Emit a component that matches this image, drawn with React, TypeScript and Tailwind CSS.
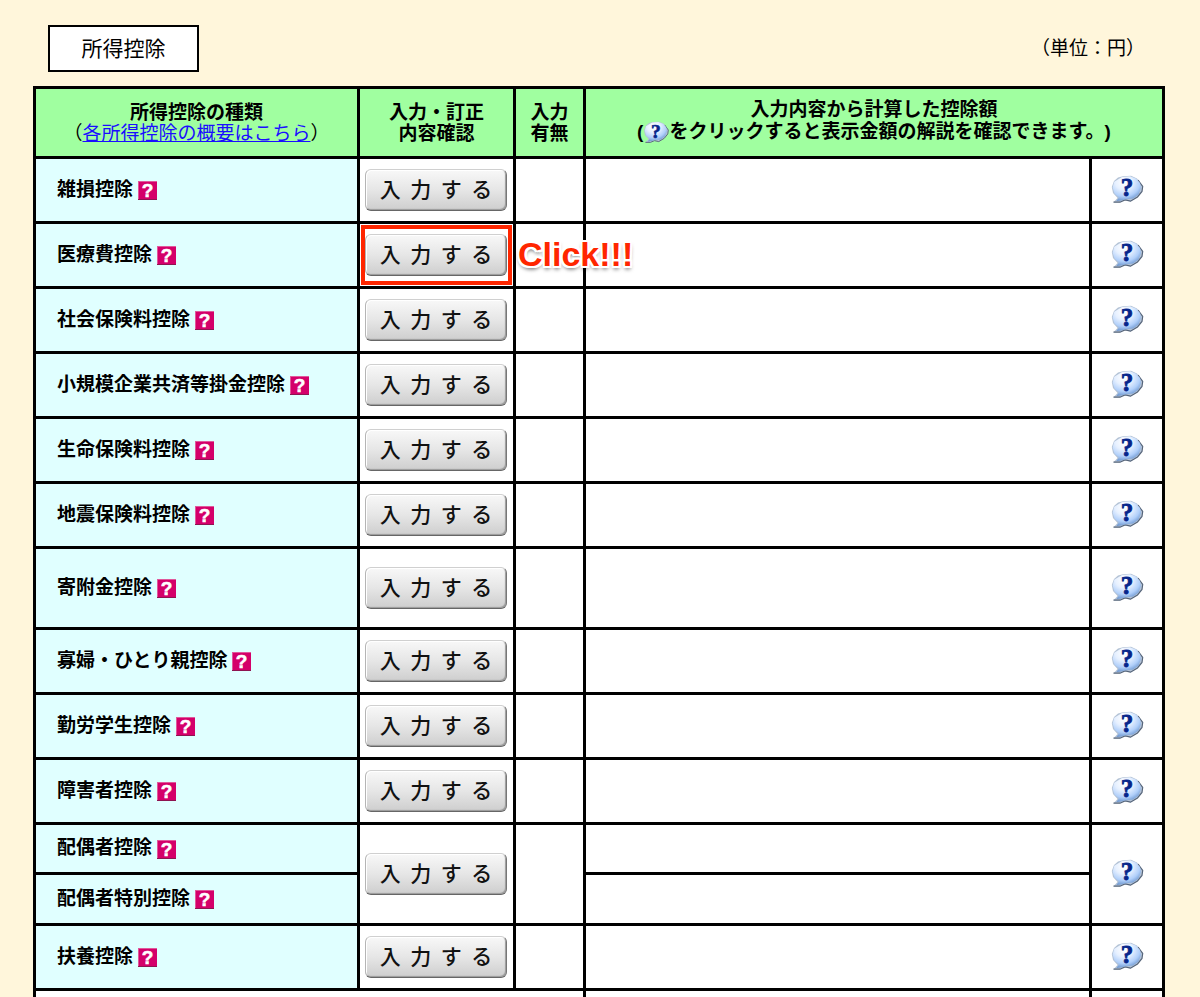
import type { ReactNode } from "react"

interface Deduction {
  name: string
  height: string
  highlight?: boolean
}

const deductions: Deduction[] = [
  { name: "雑損控除", height: "h-[65px]" },
  { name: "医療費控除", height: "h-[65px]", highlight: true },
  { name: "社会保険料控除", height: "h-[65px]" },
  { name: "小規模企業共済等掛金控除", height: "h-[65px]" },
  { name: "生命保険料控除", height: "h-[65px]" },
  { name: "地震保険料控除", height: "h-[65px]" },
  { name: "寄附金控除", height: "h-[81px]" },
  { name: "寡婦・ひとり親控除", height: "h-[65px]" },
  { name: "勤労学生控除", height: "h-[65px]" },
  { name: "障害者控除", height: "h-[65px]" },
]

const cell = "border-[3px] border-black p-0"

function HelpMark() {
  return (
    <svg viewBox="0 0 19 19" className="h-[19px] w-[19px] overflow-visible" aria-hidden="true">
      <rect width="19" height="19" fill="#e0589b" />
      <rect x="1" y="1" width="18" height="18" fill="#d4006a" />
      <rect y="18" width="19" height="1" fill="#8d1450" />
      <text
        x="9.5"
        y="16"
        textAnchor="middle"
        fontFamily="'Liberation Sans', sans-serif"
        fontWeight="bold"
        fontSize="19"
        fill="#fff"
        stroke="#fff"
        strokeWidth="0.5"
      >
        ?
      </text>
    </svg>
  )
}

function Balloon({ className }: { className: string }) {
  return (
    <svg viewBox="0 0 32 28" className={className} aria-hidden="true">
      <defs>
        <radialGradient id="balloon" cx="0.4" cy="0.25" r="0.75">
          <stop offset="0" stopColor="#ffffff" />
          <stop offset="0.4" stopColor="#e6f0ff" />
          <stop offset="0.75" stopColor="#b0cffa" />
          <stop offset="1" stopColor="#6f98d0" />
        </radialGradient>
      </defs>
      <path
        d="M12 1.2 L20 .8 L26 3.5 L31.5 11 L31 16 L26.5 22 L19.5 26.5 L14 24.8 L9 27.2 L2.5 27.2 L6.5 23 L2 18 L.8 12 L3 6 L7 2.6 Z"
        fill="#b4c3d6"
      />
      <path
        d="M27 5 L31.7 11.5 L31 16.5 L26.5 22 L19.5 26.2 L14 25 L9 27.2 L2.5 27.2"
        fill="none"
        stroke="#56657a"
        strokeWidth="1.2"
      />
      <path
        d="M11 2 L19 1.3 L25 3.4 L29 8 L30 13 L27.5 19.5 L22 23.6 L15 24.2 L10 25.4 L5.5 26 L7.8 22.6 L3.5 18.5 L1.6 12.5 L3.2 6.8 Z"
        fill="url(#balloon)"
      />
      <text
        x="16"
        y="21"
        textAnchor="middle"
        fontFamily="'Liberation Serif', serif"
        fontWeight="bold"
        fontSize="25"
        fill="#06258a"
        stroke="#06258a"
        strokeWidth="0.8"
      >
        ?
      </text>
    </svg>
  )
}

function NameCell({ name }: { name: string }) {
  return (
    <th scope="row" className={`${cell} bg-[#e0ffff] pl-[21px] text-left font-bold`}>
      <div className="flex items-center gap-[5px] pb-[2px]">
        <span>{name}</span>
        <a href="#help" aria-label={`${name}の説明`} className="pt-[3px]">
          <HelpMark />
        </a>
      </div>
    </th>
  )
}

function InputButton() {
  return (
    <button
      type="button"
      className="h-[42px] w-[142px] rounded-md border border-t-[#d0d0d0] border-r-[#777] border-b-[#666] border-l-[#b5b5b5] bg-linear-to-b from-[#f8f8f8] via-[#e6e6e6] to-[#cecece] pb-[3px] font-['Noto_Sans_CJK_JP',sans-serif] text-[21px] leading-none font-medium whitespace-pre text-[#111] shadow-[inset_-1px_-1px_1px_#999,inset_1px_1px_0_#fff]"
    >
      入  力  す  る
    </button>
  )
}

function ButtonCell({ rowSpan, children }: { rowSpan?: number; children?: ReactNode }) {
  return (
    <td rowSpan={rowSpan} className={`${cell} relative bg-white`}>
      <div className="flex pb-[1px] pl-[5px]">
        <InputButton />
      </div>
      {children}
    </td>
  )
}

function BalloonCell({ name, rowSpan }: { name: string; rowSpan?: number }) {
  return (
    <td rowSpan={rowSpan} className={`${cell} bg-white`}>
      <a href="#amount" aria-label={`${name}の金額の解説`} className="flex justify-center pb-[2px]">
        <Balloon className="h-7 w-8 overflow-visible" />
      </a>
    </td>
  )
}

function ClickCallout() {
  return (
    <>
      <div className="pointer-events-none absolute inset-[1px] border-4 border-[#ff2600]" />
      <div className="pointer-events-none absolute inset-y-0 left-full z-10 flex items-center pb-[2px] pl-[5px] font-['Liberation_Sans',sans-serif] text-[34px] leading-none font-bold text-[#ff2600] [text-shadow:2px_0_0_#fff,-2px_0_0_#fff,0_2px_0_#fff,0_-2px_0_#fff,2px_2px_0_#fff,-2px_-2px_0_#fff,2px_-2px_0_#fff,-2px_2px_0_#fff,0_3px_4px_#000a]">
        Click!!!
      </div>
    </>
  )
}

export default function App() {
  return (
    <main
      lang="ja"
      className="h-screen overflow-hidden bg-[#fff6db] pt-[25px] pr-[35px] pl-[33px] font-['Liberation_Sans','Noto_Sans_CJK_JP',sans-serif] text-[19px] leading-[21px] text-black"
    >
      <div className="mb-[14px] flex items-center justify-between pr-[20px] pl-[15px]">
        <h1 className="flex h-[47px] w-[151px] items-center justify-center border-2 border-black bg-white text-[21px]">
          所得控除
        </h1>
        <p>（単位：円）</p>
      </div>

      <table className="w-full table-fixed border-collapse">
        <colgroup>
          <col className="w-[324px]" />
          <col className="w-[156px]" />
          <col className="w-[70px]" />
          <col />
          <col className="w-[73px]" />
        </colgroup>
        <thead>
          <tr className="h-[70px] bg-[#a0ffa0]">
            <th className={cell}>
              <div>所得控除の種類</div>
              <div className="font-normal">
                （
                <a href="#summary" className="text-[#1a0dff] underline">
                  各所得控除の概要はこちら
                </a>
                ）
              </div>
            </th>
            <th className={cell}>
              入力・訂正
              <br />
              内容確認
            </th>
            <th className={cell}>
              入力
              <br />
              有無
            </th>
            <th colSpan={2} className={cell}>
              <div className="pb-[4px] leading-[22px] [text-spacing-trim:space-all]">
                <div>入力内容から計算した控除額</div>
                <div className="flex items-center justify-center">
                  <span>(</span>
                  <Balloon className="h-[22px] w-[26px] overflow-visible" />
                  <span>をクリックすると表示金額の解説を確認できます。)</span>
                </div>
              </div>
            </th>
          </tr>
        </thead>
        <tbody>
          {deductions.map(({ name, height, highlight }) => (
            <tr key={name} className={height}>
              <NameCell name={name} />
              <ButtonCell>{highlight && <ClickCallout />}</ButtonCell>
              <td className={`${cell} bg-white`} />
              <td className={`${cell} bg-white`} />
              <BalloonCell name={name} />
            </tr>
          ))}

          {/* Spouse deductions share one button */}
          <tr className="h-[50px]">
            <NameCell name="配偶者控除" />
            <ButtonCell rowSpan={2} />
            <td rowSpan={2} className={`${cell} bg-white`} />
            <td className={`${cell} bg-white`} />
            <BalloonCell name="配偶者控除" rowSpan={2} />
          </tr>
          <tr className="h-[51px]">
            <NameCell name="配偶者特別控除" />
            <td className={`${cell} bg-white`} />
          </tr>

          <tr className="h-[65px]">
            <NameCell name="扶養控除" />
            <ButtonCell />
            <td className={`${cell} bg-white`} />
            <td className={`${cell} bg-white`} />
            <BalloonCell name="扶養控除" />
          </tr>
          <tr className="h-[65px]">
            <td colSpan={3} className={`${cell} bg-white`} />
            <td className={`${cell} bg-white`} />
            <td className={`${cell} bg-white`} />
          </tr>
        </tbody>
      </table>
    </main>
  )
}
